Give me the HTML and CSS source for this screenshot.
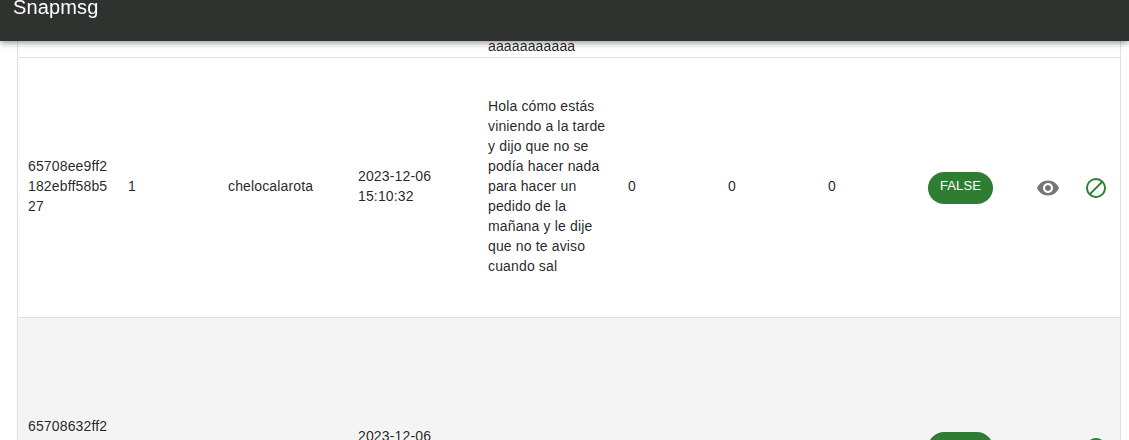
FILE: index.html
```html
<!DOCTYPE html>
<html lang="es">
<head>
<meta charset="utf-8">
<title>Snapmsg</title>
<link rel="stylesheet" href="styles.css">
</head>
<body>
<header class="appbar"><h1 class="title">Snapmsg</h1></header>
<main class="grid">
  <div class="row row-prev">
    <div class="cell message">aaaaaaaaaaa</div>
  </div>
  <div class="row">
    <div class="cell id">65708ee9ff2182ebff58b527</div>
    <div class="cell">1</div>
    <div class="cell">chelocalarota</div>
    <div class="cell">2023-12-06 15:10:32</div>
    <div class="cell message">Hola cómo estás viniendo a la tarde y dijo que no se podía hacer nada para hacer un pedido de la mañana y le dije que no te aviso cuando sal</div>
    <div class="cell">0</div>
    <div class="cell">0</div>
    <div class="cell">0</div>
    <div class="cell control"><span class="pill">FALSE</span></div>
    <div class="cell control center"><svg class="icon view" viewBox="0 0 24 24"><path d="M12 4.5C7 4.5 2.73 7.61 1 12c1.73 4.39 6 7.5 11 7.5s9.27-3.11 11-7.5c-1.73-4.39-6-7.5-11-7.5zM12 17c-2.76 0-5-2.24-5-5s2.24-5 5-5 5 2.24 5 5-2.24 5-5 5zm0-8c-1.66 0-3 1.34-3 3s1.34 3 3 3 3-1.34 3-3-1.34-3-3-3z"/></svg></div>
    <div class="cell control center last"><svg class="icon block" viewBox="0 0 24 24"><path fill-rule="evenodd" d="M12 2a10 10 0 1 0 0 20 10 10 0 0 0 0-20zM4 12a8 8 0 0 1 12.9-6.31L5.69 16.9A7.9 7.9 0 0 1 4 12zm8 8a7.9 7.9 0 0 1-4.9-1.69L18.31 7.1A8 8 0 0 1 12 20z"/></svg></div>
  </div>
  <div class="row shaded">
    <div class="cell id id-next">65708632ff2</div>
    <div class="cell"></div>
    <div class="cell"></div>
    <div class="cell date-next">2023-12-06</div>
    <div class="cell"></div>
    <div class="cell"></div>
    <div class="cell"></div>
    <div class="cell"></div>
    <div class="cell control"><span class="pill"></span></div>
    <div class="cell"></div>
    <div class="cell control center last"><svg class="icon block" viewBox="0 0 24 24"><path fill-rule="evenodd" d="M12 2a10 10 0 1 0 0 20 10 10 0 0 0 0-20zM4 12a8 8 0 0 1 12.9-6.31L5.69 16.9A7.9 7.9 0 0 1 4 12zm8 8a7.9 7.9 0 0 1-4.9-1.69L18.31 7.1A8 8 0 0 1 12 20z"/></svg></div>
  </div>
</main>
</body>
</html>
```
FILE: styles.css
```css
* { box-sizing: border-box; }

body {
  margin: 0;
  height: 440px;
  overflow: hidden;
  background: #fff;
  color: rgba(0, 0, 0, 0.87);
  font: 14px/20px "Liberation Sans", Arial, sans-serif;
  letter-spacing: 0.15px;
}

.appbar {
  position: fixed;
  top: 0;
  left: 0;
  right: 0;
  z-index: 1;
  height: 41px;
  padding: 0 13px;
  background: #2e332f;
  color: #fff;
  box-shadow: 0 2px 4px -1px rgba(0, 0, 0, 0.2), 0 4px 5px rgba(0, 0, 0, 0.14), 0 1px 10px rgba(0, 0, 0, 0.12);
}

.title {
  margin: -9px 0 0;
  font-size: 20px;
  font-weight: 400;
  line-height: 32px;
  letter-spacing: 0.15px;
}

.grid {
  width: 1104px;
  height: 440px;
  margin-left: 17px;
  overflow: hidden;
  border: solid #e0e0e0;
  border-width: 0 1px;
}

.row {
  display: grid;
  grid-template-columns: 100px 100px 130px 130px 140px 100px 100px 100px 100px 60px 42px;
  height: 260px;
  border-bottom: 1px solid #e0e0e0;
}

.row-prev {
  height: 58px;
  align-items: end;
}

.row-prev .message { grid-column: 5; padding-bottom: 1px; }

.shaded { background: #f4f4f4; }

.cell {
  display: flex;
  align-items: center;
  min-width: 0;
  padding: 0 10px 3px;
}

.id { word-break: break-all; }
.id-next { padding-bottom: 43px; }
.date-next { padding-bottom: 23px; }

.control { padding-bottom: 0; padding-top: 1px; }
.center { justify-content: center; }
.last { padding-left: 0; padding-right: 6px; }

.pill {
  width: 65px;
  height: 32px;
  border-radius: 16px;
  background: #2e7d32;
  color: #fff;
  font-size: 13px;
  line-height: 27px;
  text-align: center;
  letter-spacing: 0.14px;
}

.icon { flex: none; width: 24px; height: 24px; }
.view { fill: #757575; }
.block { fill: #2e7d32; }
```
